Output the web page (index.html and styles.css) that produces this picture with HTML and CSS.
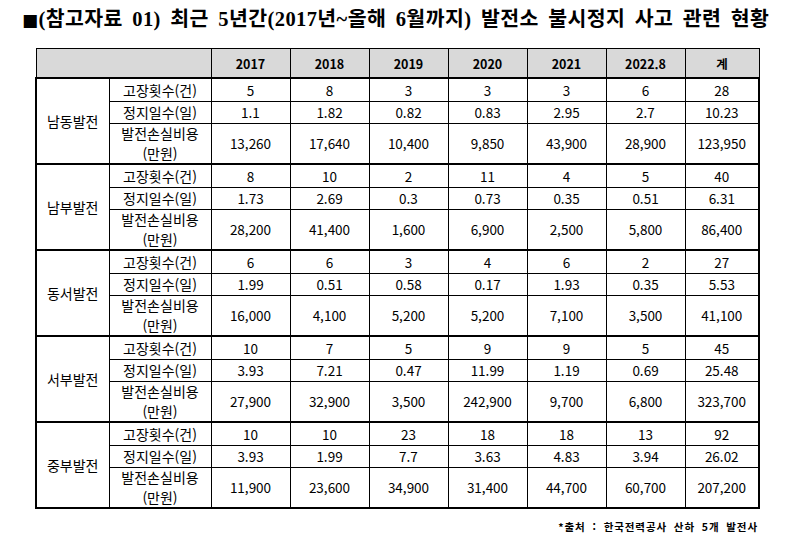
FILE: index.html
```html
<!DOCTYPE html>
<html lang="ko">
<head>
<meta charset="utf-8">
<link rel="stylesheet" href="styles.css">
</head>
<body>
<div class="page">
  <h1 class="title"><span class="sq">■</span>(참고자료 01) 최근 5년간(2017년~올해 6월까지) 발전소 불시정지 사고 관련 현황</h1>
  <table class="stats">
    <colgroup>
      <col class="c-grp"><col class="c-item">
      <col class="c-y"><col class="c-y"><col class="c-y"><col class="c-y"><col class="c-y"><col class="c-y"><col class="c-sum">
    </colgroup>
    <thead>
      <tr><th colspan="2"></th><th>2017</th><th>2018</th><th>2019</th><th>2020</th><th>2021</th><th>2022.8</th><th>계</th></tr>
    </thead>
    <tbody>
      <tr class="r1 first"><td class="grp" rowspan="3">남동발전</td><td class="item">고장횟수(건)</td><td>5</td><td>8</td><td>3</td><td>3</td><td>3</td><td>6</td><td class="last">28</td></tr>
      <tr class="r2"><td class="item">정지일수(일)</td><td>1.1</td><td>1.82</td><td>0.82</td><td>0.83</td><td>2.95</td><td>2.7</td><td class="last">10.23</td></tr>
      <tr class="r3"><td class="item">발전손실비용<br>(만원)</td><td>13,260</td><td>17,640</td><td>10,400</td><td>9,850</td><td>43,900</td><td>28,900</td><td class="last">123,950</td></tr>

      <tr class="r1 first"><td class="grp" rowspan="3">남부발전</td><td class="item">고장횟수(건)</td><td>8</td><td>10</td><td>2</td><td>11</td><td>4</td><td>5</td><td class="last">40</td></tr>
      <tr class="r2"><td class="item">정지일수(일)</td><td>1.73</td><td>2.69</td><td>0.3</td><td>0.73</td><td>0.35</td><td>0.51</td><td class="last">6.31</td></tr>
      <tr class="r3"><td class="item">발전손실비용<br>(만원)</td><td>28,200</td><td>41,400</td><td>1,600</td><td>6,900</td><td>2,500</td><td>5,800</td><td class="last">86,400</td></tr>

      <tr class="r1 first"><td class="grp" rowspan="3">동서발전</td><td class="item">고장횟수(건)</td><td>6</td><td>6</td><td>3</td><td>4</td><td>6</td><td>2</td><td class="last">27</td></tr>
      <tr class="r2"><td class="item">정지일수(일)</td><td>1.99</td><td>0.51</td><td>0.58</td><td>0.17</td><td>1.93</td><td>0.35</td><td class="last">5.53</td></tr>
      <tr class="r3"><td class="item">발전손실비용<br>(만원)</td><td>16,000</td><td>4,100</td><td>5,200</td><td>5,200</td><td>7,100</td><td>3,500</td><td class="last">41,100</td></tr>

      <tr class="r1 first"><td class="grp" rowspan="3">서부발전</td><td class="item">고장횟수(건)</td><td>10</td><td>7</td><td>5</td><td>9</td><td>9</td><td>5</td><td class="last">45</td></tr>
      <tr class="r2"><td class="item">정지일수(일)</td><td>3.93</td><td>7.21</td><td>0.47</td><td>11.99</td><td>1.19</td><td>0.69</td><td class="last">25.48</td></tr>
      <tr class="r3"><td class="item">발전손실비용<br>(만원)</td><td>27,900</td><td>32,900</td><td>3,500</td><td>242,900</td><td>9,700</td><td>6,800</td><td class="last">323,700</td></tr>

      <tr class="r1 first"><td class="grp" rowspan="3">중부발전</td><td class="item">고장횟수(건)</td><td>10</td><td>10</td><td>23</td><td>18</td><td>18</td><td>13</td><td class="last">92</td></tr>
      <tr class="r2"><td class="item">정지일수(일)</td><td>3.93</td><td>1.99</td><td>7.7</td><td>3.63</td><td>4.83</td><td>3.94</td><td class="last">26.02</td></tr>
      <tr class="r3 end"><td class="item">발전손실비용<br>(만원)</td><td>11,900</td><td>23,600</td><td>34,900</td><td>31,400</td><td>44,700</td><td>60,700</td><td class="last">207,200</td></tr>
    </tbody>
  </table>
  <p class="source">*출처 : 한국전력공사 산하 5개 발전사</p>
</div>
</body>
</html>
```

FILE: styles.css
```css
html, body {
  margin: 0;
  padding: 0;
  background: #ffffff;
}

.page {
  padding: 8px 0 0 22px;
  color: #000;
}

.title {
  margin: 0;
  font-family: "Liberation Serif", "Noto Sans CJK KR", serif;
  font-size: 20.5px;
  font-weight: bold;
  line-height: 23px;
  white-space: nowrap;
  word-spacing: 4px;
  letter-spacing: 0.4px;
}

.title .sq {
  font-family: "DejaVu Sans", sans-serif;
  font-size: 17px;
}

.stats {
  margin: 16px 0 0 13px;
  border-collapse: collapse;
  table-layout: fixed;
  width: 723px;
  font-family: "Noto Sans CJK KR", sans-serif;
  font-size: 13.5px;
  color: #000;
}

.c-grp { width: 73px; }
.c-item { width: 102px; }
.c-y { width: 79px; }
.c-sum { width: 74px; }

.stats th,
.stats td {
  border: 1px solid #000;
  padding: 0;
  text-align: center;
  vertical-align: middle;
  line-height: 19px;
}

.stats td.item,
.stats td.grp {
  font-size: 14px;
}

.stats th {
  background: #d9d9d9;
  height: 28px;
  font-size: 12.5px;
  font-weight: bold;
  border-bottom: 2px solid #000;
}

.stats tr.first td {
  border-top: 2px solid #000;
}

.stats td.grp {
  border-left: 2px solid #000;
  border-bottom: 2px solid #000;
}

.stats td.last {
  border-right: 2px solid #000;
}

.stats tr.r1 td { height: 22px; }
.stats tr.r2 td { height: 21px; }
.stats tr.r3 td { height: 39px; }

.stats tr.r3 td.item { line-height: 19.5px; }

.stats tr.r3 td { border-bottom: 2px solid #000; }

.source {
  margin: 11px 0 0 0;
  width: 736px;
  text-align: right;
  font-family: "Noto Sans CJK KR", sans-serif;
  font-size: 10.5px;
  font-weight: bold;
  line-height: 14px;
  letter-spacing: 0.9px;
  word-spacing: 3px;
}
```
